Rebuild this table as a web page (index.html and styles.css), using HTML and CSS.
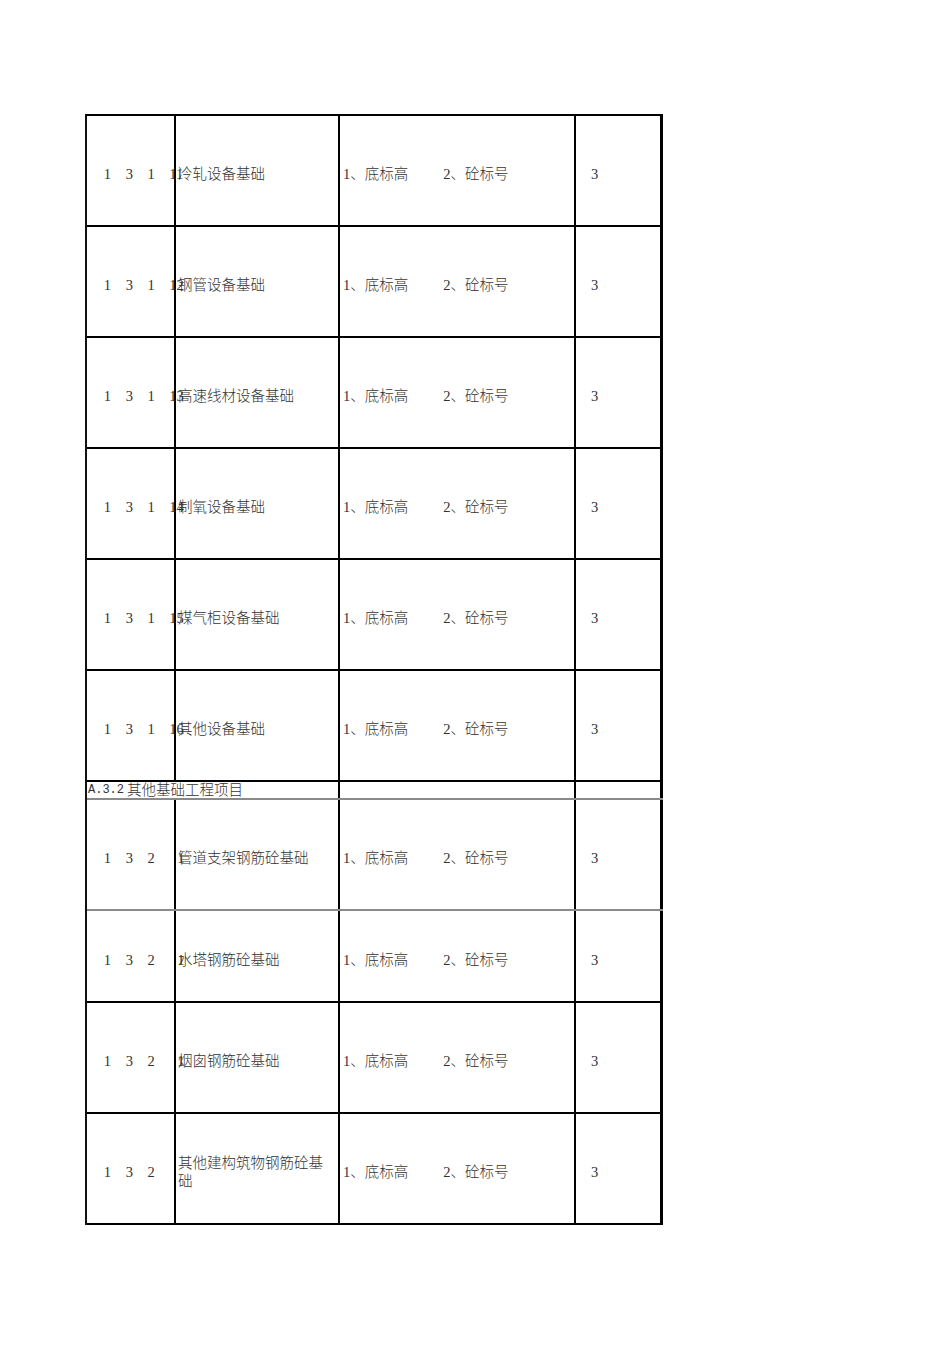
FILE: index.html
```html
<!DOCTYPE html>
<html lang="zh-CN">
<head>
<meta charset="utf-8">
<title>A.3 设备基础</title>
<link rel="stylesheet" href="styles.css">
</head>
<body>
<div class="sheet">
  <div class="row">
    <div class="cell code"><span class="sp">131</span><span>11</span></div>
    <div class="cell name">冷轧设备基础</div>
    <div class="cell desc"><span>1、底标高</span><span class="second">2、砼标号</span></div>
    <div class="cell unit">3</div>
  </div>
  <div class="row">
    <div class="cell code"><span class="sp">131</span><span>12</span></div>
    <div class="cell name">钢管设备基础</div>
    <div class="cell desc"><span>1、底标高</span><span class="second">2、砼标号</span></div>
    <div class="cell unit">3</div>
  </div>
  <div class="row">
    <div class="cell code"><span class="sp">131</span><span>13</span></div>
    <div class="cell name">高速线材设备基础</div>
    <div class="cell desc"><span>1、底标高</span><span class="second">2、砼标号</span></div>
    <div class="cell unit">3</div>
  </div>
  <div class="row">
    <div class="cell code"><span class="sp">131</span><span>14</span></div>
    <div class="cell name">制氧设备基础</div>
    <div class="cell desc"><span>1、底标高</span><span class="second">2、砼标号</span></div>
    <div class="cell unit">3</div>
  </div>
  <div class="row">
    <div class="cell code"><span class="sp">131</span><span>15</span></div>
    <div class="cell name">煤气柜设备基础</div>
    <div class="cell desc"><span>1、底标高</span><span class="second">2、砼标号</span></div>
    <div class="cell unit">3</div>
  </div>
  <div class="row">
    <div class="cell code"><span class="sp">131</span><span>16</span></div>
    <div class="cell name">其他设备基础</div>
    <div class="cell desc"><span>1、底标高</span><span class="second">2、砼标号</span></div>
    <div class="cell unit">3</div>
  </div>
  <div class="row section">
    <div class="cell title"><span class="num">A.3.2</span>其他基础工程项目</div>
    <div class="cell"></div>
    <div class="cell unit"></div>
  </div>
  <div class="row gray">
    <div class="cell code"><span class="sp">132</span><span class="tail">1</span></div>
    <div class="cell name">管道支架钢筋砼基础</div>
    <div class="cell desc"><span>1、底标高</span><span class="second">2、砼标号</span></div>
    <div class="cell unit">3</div>
  </div>
  <div class="row short">
    <div class="cell code"><span class="sp">132</span><span class="tail">1</span></div>
    <div class="cell name">水塔钢筋砼基础</div>
    <div class="cell desc"><span>1、底标高</span><span class="second">2、砼标号</span></div>
    <div class="cell unit">3</div>
  </div>
  <div class="row">
    <div class="cell code"><span class="sp">132</span><span class="tail">1</span></div>
    <div class="cell name">烟囱钢筋砼基础</div>
    <div class="cell desc"><span>1、底标高</span><span class="second">2、砼标号</span></div>
    <div class="cell unit">3</div>
  </div>
  <div class="row">
    <div class="cell code"><span class="sp">132</span></div>
    <div class="cell name wrap">其他建构筑物钢筋砼基础</div>
    <div class="cell desc"><span>1、底标高</span><span class="second">2、砼标号</span></div>
    <div class="cell unit">3</div>
  </div>
</div>
</body>
</html>
```
FILE: styles.css
```css
body {
  margin: 0;
  background: #ffffff;
  font-family: "Liberation Serif", "Noto Sans CJK SC", serif;
  font-size: 14.5px;
  font-weight: 300;
  color: #333333;
}

.sheet {
  margin: 114px 0 0 85px;
  width: max-content;
  border-top: 2px solid #000;
  border-left: 2px solid #111;
}

.row {
  display: grid;
  grid-template-columns: 89px 164px 236px 87px;
  height: 111px;
  box-sizing: border-box;
  border-bottom: 2px solid #000;
}

.row.short {
  height: 92px;
}

.row.gray {
  border-bottom-color: #8a8a8a;
}

.row.section {
  grid-template-columns: 253px 236px 87px;
  height: 18px;
  border-bottom: 2px solid #8a8a8a;
}

.cell {
  box-sizing: border-box;
  min-width: 0;
  display: flex;
  align-items: center;
  padding-top: 7px;
  border-right: 2px solid #000;
  white-space: nowrap;
  line-height: 18px;
}

.cell.unit {
  border-right-width: 3px;
  padding-left: 15px;
}

.cell.code {
  padding-left: 16.8px;
}

.code .sp {
  letter-spacing: 14.6px;
}

.code .tail {
  margin-left: 8px;
}

.cell.name {
  padding-left: 2px;
  padding-right: 6px;
}

.cell.name.wrap {
  white-space: normal;
}

.cell.desc {
  padding-left: 3px;
}

.desc .second {
  margin-left: 35px;
}

.cell.title {
  align-items: flex-end;
  padding-top: 0;
  padding-left: 1px;
  line-height: 16px;
}

.title .num {
  font-family: "Liberation Mono", monospace;
  font-size: 12px;
  margin-right: 3px;
}
```
